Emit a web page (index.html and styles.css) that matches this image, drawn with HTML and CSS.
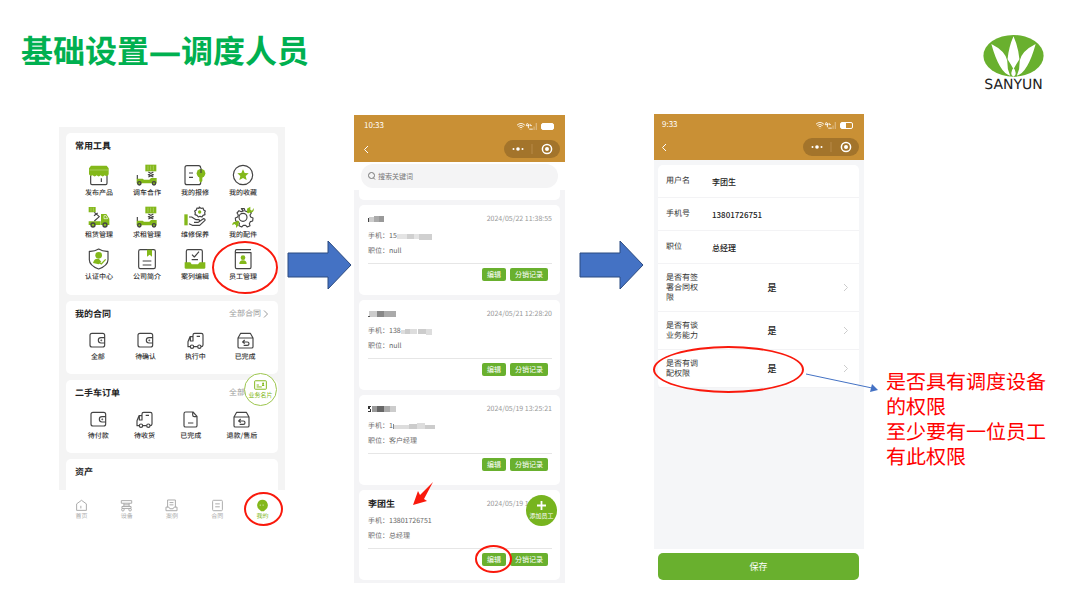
FILE: index.html
```html
<!DOCTYPE html>
<html lang="zh-CN">
<head>
  <meta charset="UTF-8" />
  <meta name="viewport" content="width=device-width, initial-scale=1.0"/>
  <title>基础设置—调度人员</title>
  <link rel="stylesheet" href="styles.css">
</head>
<body>

  <!-- icons used more than once -->
  <svg class="sprite" aria-hidden="true">
    <symbol id="lift" viewBox="0 0 66 66">
      <path class="g" d="M28 2h33v20H28z"/>
      <path class="thin" d="M36 5v14M44 5v14M52 5v14"/>
      <path class="k" d="M37 24l15 8-15 7M52 24l-15 8 15 7M4 33v12"/>
      <path class="g" d="M2 44h18l4 3h16l5-5h17v16H2z"/>
      <circle class="kg" cx="10" cy="58" r="5"/><circle class="kg" cx="54" cy="58" r="5"/>
    </symbol>
    <symbol id="wallet" viewBox="0 0 51 51">
      <rect class="k" x="3" y="4" width="44" height="41" rx="6"/>
      <path class="k" d="M47 17H36a8 8 0 0 0 0 16h11"/><circle class="k" cx="37" cy="25" r="1"/>
    </symbol>
    <symbol id="truck" viewBox="0 0 51 51">
      <path class="k" d="M10 44H3V29l6-15h9M18 14V9q0-5 5-5h20q5 0 5 5v30q0 5-6 5M20 44h12M10 15v12h8V14M29 13h10"/>
      <circle class="k" cx="15" cy="44" r="5"/><circle class="k" cx="37" cy="44" r="5"/>
    </symbol>
    <symbol id="box" viewBox="0 0 51 51">
      <path class="k" d="M3 18L11 4h29l8 14v26q0 4-4 4H7q-4 0-4-4zM3 18h45"/>
      <path class="k" d="M18 30h13a5 5 0 0 1 0 10H20M23 24l-6 6 6 5"/>
    </symbol>
    <symbol id="chevron" viewBox="0 0 10 16"><path d="M2 1l7 7-7 7"/></symbol>
    <symbol id="back" viewBox="0 0 10 16"><path d="M8 1L1 8l7 7"/></symbol>
    <symbol id="signal" viewBox="0 0 24 10">
      <path d="M0 3.500q4.500-4 9 0M1.500 5q3-2.500 6 0M3 6.500q1.500-1 3 0"/><path d="M4.500 8v.5"/>
      <path d="M12 1l-1.500 3H14M13 2v5M15 2v2h2M14 8h4"/><path class="dim" d="M19.500 5v4M22 1v8"/>
    </symbol>
    <symbol id="capsule" viewBox="0 0 56 18">
      <rect class="pill" width="56" height="18" rx="9"/>
      <path class="sep" d="M28 4v10"/>
      <circle cx="9.500" cy="9" r="1"/><circle cx="14" cy="9" r="1.800"/><circle cx="18.500" cy="9" r="1"/>
      <circle cx="43" cy="9" r="2"/><circle class="ring" cx="43" cy="9" r="4.600"/>
    </symbol>
    <symbol id="arrow" viewBox="0 0 66 50">
      <path d="M1 13h40V1l23 24-23 24V37H1z"/>
    </symbol>
  </svg>

  <header class="slide-head">
    <h1>基础设置—调度人员</h1>
    <div class="logo">
      <svg viewBox="0 0 182 127">
        <ellipse cx="91" cy="63" rx="91" ry="63" fill="#69b02e"/>
        <path fill="#fff" d="M91 4Q105 35 109 73L99 89Q91 105 91 98Q91 105 83 89L73 73Q77 35 91 4zM24 27Q66 48 72 77L74 103 81 123Q48 114 24 27zM158 27Q116 48 110 77L108 103 101 123Q134 114 158 27zM91 98Q101 112 96 122L91 126 86 122Q81 112 91 98z"/>
      </svg>
      <span>SANYUN</span>
    </div>
  </header>

  <main class="flow">

    <section class="phone home">
      <div class="home-body">
        <div class="card tools">
          <h2>常用工具</h2>
          <div class="tool-grid">
            <a href="#"><svg viewBox="0 0 66 66"><path class="k" d="M8 34v24q0 4 4 4h41q4 0 4-4V34M40 43v11"/><path class="g" d="M9 5h47l6 8v17a7 7 0 0 1-12 4 8 8 0 0 1-12 0 8 8 0 0 1-12 0 8 8 0 0 1-12 0 7 7 0 0 1-11-4V13z"/><path class="thin" d="M5 18h55"/></svg>发布产品</a>
            <a href="#"><svg><use href="#lift"/></svg>调车合作</a>
            <a href="#"><svg viewBox="0 0 66 66"><path class="k" d="M50 12q0-7-6-7H9Q3 5 3 11v45q0 6 6 6h35q6 0 6-6v-4M15 27h12M15 40h12"/><circle class="g" cx="51" cy="28" r="13"/><path class="g" d="M46 36h9v15l-5 5-4-5z"/><path class="k" d="M51 12v15"/></svg>我的报修</a>
            <a href="#"><svg viewBox="0 0 66 66"><circle class="k" cx="33" cy="33" r="29"/><path class="g" d="M33 16l5 11 12 1-9 8 3 12-11-6-11 6 3-12-9-8 12-1z"/></svg>我的收藏</a>
            <a href="#"><svg viewBox="0 0 66 66"><path class="g" d="M2 3h21v16H2zM2 46h36v11H2zM39 24h16l9 14v19H39z"/><path class="thin" d="M9 5v12M16 5v12"/><path class="w" d="M48 29h6l5 9H48z"/><path class="k" d="M19 19l15 13-15 13M18 29l11-8"/><circle class="kg" cx="15" cy="57" r="6"/><circle class="kg" cx="51" cy="57" r="6"/></svg>租赁管理</a>
            <a href="#"><svg><use href="#lift"/></svg>求租管理</a>
            <a href="#"><svg viewBox="0 0 66 66"><path class="g" d="M1 25h10v33H1z"/><path class="k" d="M15 33h8l13 8h9q4 5-2 8H30M44 48l14-10q6 0 5 5L47 58H25l-10-5M46 3l5 4 6-1 2 6 5 3-2 5 1 6-6 2-3 5-6-2-5 2-4-5-6-2 1-6-2-5 5-3 2-6 6 1z"/><circle class="g" cx="47" cy="18" r="5"/></svg>维修保养</a>
            <a href="#"><svg viewBox="0 0 66 66"><path class="k" d="M28 8h9l2 7 6 2 7-3 6 7-4 6 2 6 7 3-1 9-7 2-3 6 2 6-8 4-5-5h-7l-5 5-8-4 1-7-4-5-7-2-1-9 7-3 2-6-4-6 6-7 7 3 6-2z"/><circle class="k" cx="33" cy="34" r="12"/><path class="wrench" d="M12 54l8-8M46 20l8-8"/><path class="g" d="M46 19l-1-11 10-6v9l5 3 5-8q3 18-19 13zM18 48l2 10-8 8v-8l-5-4-6 4q-1-14 17-10z"/></svg>我的配件</a>
            <a href="#"><svg viewBox="0 0 66 66"><path class="k" d="M32 3q13 8 28 7v25q0 17-28 28Q4 52 4 35V10q15 1 28-7z"/><circle class="g" cx="32" cy="22" r="10"/><path class="g" d="M15 45q4-16 18-12l7 8-8 8z"/><path class="gl" d="M30 42l10 6 13-14"/></svg>认证中心</a>
            <a href="#"><svg viewBox="0 0 66 66"><rect class="k" x="8" y="5" width="50" height="57" rx="5"/><path class="g" d="M33 5h15v21l-7-6-8 6z"/><path class="k" d="M20 39h26M20 51h26"/></svg>公司简介</a>
            <a href="#"><svg viewBox="0 0 66 66"><path class="k" d="M7 45V10q0-5 5-5h38q5 0 5 5v35M24 20l7 7 14-16M23 35h19"/><path class="g" d="M2 43h17l4 6h19l5-6h17v16q0 3-4 3H6q-4 0-4-3z"/></svg>案列编辑</a>
            <a href="#"><svg viewBox="0 0 66 66"><path class="k" d="M57 5H14q-4 0-4 5M10 14h47v44q0 4-4 4H14q-4 0-4-4V10"/><circle class="g" cx="33" cy="29" r="7"/><path class="g" d="M22 48q0-11 11-11t11 11z"/></svg>员工管理</a>
          </div>
          <span class="mark mark-staff"></span>
        </div>

        <div class="card orders">
          <div class="card-head"><h2>我的合同</h2><a href="#">全部合同<svg><use href="#chevron"/></svg></a></div>
          <div class="order-row">
            <a href="#"><svg><use href="#wallet"/></svg>全部</a>
            <a href="#"><svg><use href="#wallet"/></svg>待确认</a>
            <a href="#"><svg><use href="#truck"/></svg>执行中</a>
            <a href="#"><svg><use href="#box"/></svg>已完成</a>
          </div>
        </div>

        <div class="card orders">
          <div class="card-head"><h2>二手车订单</h2><a href="#">全部订单<svg><use href="#chevron"/></svg></a></div>
          <div class="order-row">
            <a href="#"><svg><use href="#wallet"/></svg>待付款</a>
            <a href="#"><svg><use href="#truck"/></svg>待收货</a>
            <a href="#"><svg viewBox="0 0 51 51"><path class="k" d="M11 3h22l12 13v28q0 4-5 4H11q-5 0-5-4V8q0-5 5-5zM32 4v8q0 5 5 5h8M18 36h16"/></svg>已完成</a>
            <a href="#"><svg><use href="#box"/></svg>退款/售后</a>
          </div>
          <button class="biz-card" type="button">
            <svg viewBox="0 0 40 30"><rect x="2" y="2" width="36" height="26" rx="2"/><path d="M8 15h7M8 21h16"/><circle class="g" cx="28" cy="10" r="3"/><path class="g" d="M24 18l2-5h4l2 5z"/></svg>
            业务名片
          </button>
        </div>

        <div class="card last"><h2>资产</h2></div>
      </div>

      <nav class="tabs">
        <a href="#"><svg viewBox="0 0 40 40"><path d="M5 35V15L20 4l15 11v20zM18 21v8"/></svg>首页</a>
        <a href="#"><svg viewBox="0 0 40 40"><path d="M4 5h32v8H4zM12 13v10M28 13v10M12 18h16M6 23h28v6H6z"/><circle cx="9" cy="33" r="4"/><circle cx="31" cy="33" r="4"/></svg>设备</a>
        <a href="#"><svg viewBox="0 0 40 40"><path d="M8 25V3h24v22M14 11h12M14 18h12M3 25h9l3 5h10l3-5h9v11H3z"/></svg>案例</a>
        <a href="#"><svg viewBox="0 0 40 40"><rect x="5" y="4" width="30" height="32" rx="3"/><path d="M13 15h14M13 24h14"/></svg>合同</a>
        <a class="on" href="#"><svg viewBox="0 0 40 40"><path class="g" d="M20 2a17 17 0 0 1 9 31l-5 5h-8l-5-5a17 17 0 0 1 9-31z"/><path class="w" d="M13 17v4M22 17v4"/></svg>我的</a>
        <span class="mark mark-mine"></span>
      </nav>
    </section>

    <svg class="step"><use href="#arrow"/></svg>

    <section class="phone staff">
      <div class="bar">
        <div class="status"><span>10:33</span><svg class="sig"><use href="#signal"/></svg><i class="battery"></i></div>
        <div class="nav"><svg class="back"><use href="#back"/></svg><svg class="capsule"><use href="#capsule"/></svg></div>
      </div>
      <div class="search">
        <svg viewBox="0 0 16 16"><circle cx="7" cy="7" r="6"/><path d="M11 12l3 3"/></svg>
        <input type="search" aria-label="搜索关键词" placeholder="搜索关键词">
      </div>
      <div class="staff-list">
        <div class="prev-card"></div>
        <article class="card person">
          <div class="row"><svg class="mosaic name" viewBox="0 0 28 8"><path fill="#444" d="M0 3h1v4H0z"/><path fill="#ccc" d="M1 2h6v5H1z"/><path fill="#aaa" d="M6 1h5v6H6z"/><path fill="#999" d="M11 1h5v6h-5z"/></svg><time>2024/05/22 11:38:55</time></div>
          <p>手机：15<svg class="mosaic" viewBox="0 0 36 8"><path fill="#e4e4e4" d="M0 2h22v5H0z"/><path fill="#d0d0d0" d="M10 2h7v5h-7zM22 2h13v6H22z"/></svg></p>
          <p>职位：null</p>
          <div class="actions"><button type="button">编辑</button><button type="button">分销记录</button></div>
        </article>
        <article class="card person">
          <div class="row"><svg class="mosaic name" viewBox="0 0 28 8"><path fill="#ccc" d="M1 1h9v6H1z"/><path fill="#888" d="M9 1h7v6H9z"/><path fill="#aaa" d="M16 1h12v6H16z"/><path fill="#555" d="M0 6h2v1H0z"/></svg><time>2024/05/21 12:28:20</time></div>
          <p>手机：138<svg class="mosaic" viewBox="0 0 36 8"><path fill="#ddd" d="M0 3h5v4H0zM8 2h8v5H8zM25 2h6v6h-6z"/><path fill="#ccc" d="M4 2h5v5H4zM17 2h8v5h-8z"/></svg></p>
          <p>职位：null</p>
          <div class="actions"><button type="button">编辑</button><button type="button">分销记录</button></div>
        </article>
        <article class="card person">
          <div class="row"><svg class="mosaic name" viewBox="0 0 28 8"><path fill="#333" d="M0 1h3v1H2v2h1v3H0V6h2V4H0z"/><path fill="#999" d="M4 1h5v6H4z"/><path fill="#666" d="M9 1h7v6H9z"/><path fill="#aaa" d="M16 1h6v6h-6z"/><path fill="#ccc" d="M22 1h6v6h-6z"/></svg><time>2024/05/19 13:25:21</time></div>
          <p>手机：1<svg class="mosaic wide" viewBox="0 0 44 8"><path fill="#888" d="M0 2h1v5H0z"/><path fill="#ddd" d="M1 3h15v4H1zM24 1h8v6h-8z"/><path fill="#ccc" d="M16 2h8v5h-8zM32 3h10v4H32z"/></svg></p>
          <p>职位：客户经理</p>
          <div class="actions"><button type="button">编辑</button><button type="button">分销记录</button></div>
        </article>
        <article class="card person">
          <div class="row"><h2>李团生</h2><time>2024/05/19 13:20:10</time></div>
          <p>手机：13801726751</p>
          <p>职位：总经理</p>
          <div class="actions"><button type="button">编辑</button><button type="button">分销记录</button></div>
          <button class="add" type="button"><svg viewBox="0 0 10 10"><path d="M5 0v10M0 5h10"/></svg>添加员工</button>
          <svg class="pointer" viewBox="0 0 22 25"><path d="M21 1L12 18l3 2L1 24 6 10l2 4z"/></svg>
          <span class="mark mark-edit"></span>
        </article>
      </div>
    </section>

    <svg class="step step-2"><use href="#arrow"/></svg>

    <section class="phone edit">
      <div class="bar">
        <div class="status"><span>9:33</span><svg class="sig"><use href="#signal"/></svg><i class="battery half"></i></div>
        <div class="nav"><svg class="back"><use href="#back"/></svg><svg class="capsule"><use href="#capsule"/></svg></div>
      </div>
      <form class="edit-form">
        <div class="fields">
          <div class="field"><label for="user">用户名</label><input id="user" type="text" value="李团生"></div>
          <div class="field"><label for="tel">手机号</label><input id="tel" type="text" value="13801726751"></div>
          <div class="field"><label for="job">职位</label><input id="job" type="text" value="总经理"></div>
          <div class="field tall"><label for="sign">是否有签署合同权限</label><select id="sign"><option>是</option></select><svg><use href="#chevron"/></svg></div>
          <div class="field mid"><label for="talk">是否有谈业务能力</label><select id="talk"><option>是</option></select><svg><use href="#chevron"/></svg></div>
          <div class="field mid">
            <label for="assign">是否有调配权限</label><select id="assign"><option>是</option></select><svg><use href="#chevron"/></svg>
            <span class="mark mark-assign"></span>
            <svg class="connector" viewBox="0 0 74 20"><path class="line" d="M1 1l66 14"/><path class="head" d="M67 11l6 6-8 2z"/></svg>
          </div>
        </div>
      </form>
      <div class="save"><button type="button">保存</button></div>
    </section>

    <p class="note">是否具有调度设备的权限<br>至少要有一位员工有此权限</p>

  </main>

</body>
</html>
```

FILE: styles.css
```css
* {
  box-sizing: border-box;
}
body {
  margin: 0;
  background: #fff;
  color: #333;
  font-family: "Noto Sans CJK SC", sans-serif;
  font-size: 7px;
  line-height: 10px;
  text-rendering: geometricPrecision;
}
h1, h2, p {
  margin: 0;
}
h2 {
  font-size: 9px;
  line-height: 12px;
  color: #222;
}
a {
  color: inherit;
  text-decoration: none;
}
button, input, select {
  font-family: inherit;
  border: none;
  padding: 0;
  margin: 0;
}
svg {
  display: block;
  flex: none;
}
.sprite {
  position: absolute;
  width: 0;
  height: 0;
}
.k {
  fill: none;
  stroke: #444;
  stroke-width: 3.5;
  stroke-linejoin: round;
}
.g {
  fill: #83b81a;
  stroke: none;
}
.kg {
  fill: #83b81a;
  stroke: #444;
  stroke-width: 4;
}
.gl {
  fill: none;
  stroke: #83b81a;
  stroke-width: 4;
}
.w {
  fill: none;
  stroke: #fff;
  stroke-width: 2;
}
.thin {
  fill: none;
  stroke: #b9d67a;
  stroke-width: 2;
}
.wrench {
  stroke: #83b81a;
  stroke-width: 7;
}

/* header */
.slide-head {
  display: flex;
  justify-content: space-between;
  align-items: flex-start;
  height: 114px;
  padding: 28px 42px 0 21px;
}
h1 {
  font-family: "Open Sans", "Noto Sans CJK SC", sans-serif;
  font-size: 32px;
  line-height: 48px;
  color: #00b050;
}
.logo {
  display: flex;
  flex-direction: column;
  align-items: center;
  padding-top: 7px;
  font-family: "DejaVu Sans", sans-serif;
  font-size: 14px;
  line-height: 16px;
  color: #222;
}
.logo svg {
  width: 61px;
  height: 42px;
}

/* three screens with an arrow between each */
.flow {
  display: grid;
  grid-template-columns: 226fr 69px 211fr 89px 210fr 222px;
  align-items: start;
  padding-left: 59px;
}
.step {
  width: 66px;
  height: 50px;
  margin: 126px auto 0;
  fill: #4472c4;
  stroke: #2b4a80;
  stroke-width: 1;
}
.step-2 {
  margin-left: 14px;
}
.card {
  position: relative;
  background: #fff;
  border-radius: 5px;
}
.mark {
  position: absolute;
  border: 2px solid #f9190c;
  border-radius: 50%;
  pointer-events: none;
}

/* home screen */
.home {
  margin-top: 13px;
}
.home-body {
  display: flex;
  flex-direction: column;
  gap: 6px;
  padding: 6px 7px 0;
  background: #f4f4f4;
}
.home .card {
  padding: 7px 8px 7px 9px;
}
.tool-grid {
  display: grid;
  grid-template-columns: repeat(4, 1fr);
  row-gap: 8px;
  padding: 12px 3px 6px 0;
}
.tool-grid a,
.order-row a,
.tabs a {
  display: flex;
  flex-direction: column;
  align-items: center;
}
.tool-grid a {
  gap: 2px;
  font-weight: 500;
}
.tool-grid svg {
  width: 22px;
  height: 22px;
}
.mark-staff {
  right: 0;
  bottom: 1px;
  width: 66px;
  height: 53px;
}
.card-head {
  display: flex;
  justify-content: space-between;
  align-items: center;
}
.card-head a {
  display: flex;
  align-items: center;
  gap: 2px;
  padding-right: 2px;
  font-size: 8px;
  color: #999;
}
.card-head svg {
  width: 5px;
  height: 8px;
  fill: none;
  stroke: #999;
  stroke-width: 2;
}
.order-row {
  display: flex;
  justify-content: space-around;
  padding: 12px 0 5px;
  font-weight: 500;
}
.order-row a {
  gap: 3px;
}
.order-row svg {
  width: 17px;
  height: 17px;
}
.biz-card {
  position: absolute;
  right: 1px;
  top: -7px;
  display: flex;
  flex-direction: column;
  align-items: center;
  justify-content: center;
  width: 33px;
  height: 33px;
  border: 1px solid #9dc64e;
  border-radius: 50%;
  background: #fff;
  color: #83b81a;
  font-size: 6px;
  line-height: 9px;
  white-space: nowrap;
}
.biz-card svg {
  width: 13px;
  height: 10px;
  fill: none;
  stroke: #83b81a;
  stroke-width: 3;
}
.home .last {
  padding-bottom: 12px;
  border-radius: 5px 5px 0 0;
}
.tabs {
  position: relative;
  display: grid;
  grid-template-columns: repeat(5, 1fr);
  padding-top: 9px;
  color: #aaa;
  font-size: 6px;
  line-height: 8px;
}
.tabs svg {
  width: 13px;
  height: 13px;
  fill: none;
  stroke: #aaa;
  stroke-width: 3;
}
.tabs .on {
  color: #83b81a;
}
.mark-mine {
  right: 2px;
  top: 2px;
  width: 39px;
  height: 34px;
}

/* phone top bar */
.bar {
  display: flex;
  flex-direction: column;
  gap: 8px;
  padding: 5px 5px 4px 10px;
  background: #c99035;
  color: #fff;
}
.status {
  display: flex;
  align-items: center;
  gap: 3px;
  padding-right: 6px;
  font-size: 8px;
  line-height: 12px;
}
.status span {
  flex: 1;
}
.sig {
  width: 21px;
  height: 9px;
  fill: none;
  stroke: #fff;
  stroke-width: 1;
}
.dim {
  opacity: 0.5;
}
.battery {
  width: 13px;
  height: 7px;
  border: 1px solid #fff;
  border-radius: 2px;
  background: #fff;
}
.battery.half {
  background: linear-gradient(to right, #fff 45%, transparent 45%);
}
.nav {
  display: flex;
  justify-content: space-between;
  align-items: center;
}
.back {
  width: 5px;
  height: 9px;
  fill: none;
  stroke: #fff;
  stroke-width: 2;
}
.capsule {
  width: 56px;
  height: 18px;
  fill: #fff;
}
.pill {
  fill: #a3742b;
}
.sep {
  stroke: #b88a48;
}
.ring {
  fill: none;
  stroke: #fff;
  stroke-width: 1.5;
}

/* staff list */
.staff {
  padding-top: 1px;
}
.search {
  display: flex;
  align-items: center;
  gap: 2px;
  height: 24px;
  margin: 2px 7px;
  padding: 0 7px;
  border-radius: 12px;
  background: #f4f4f5;
}
.search svg {
  width: 8px;
  height: 8px;
  fill: none;
  stroke: #777;
  stroke-width: 2;
}
.search input {
  flex: 1;
  min-width: 0;
  background: none;
  font-size: 7px;
}
.search input::placeholder {
  color: #777;
}
.staff-list {
  display: flex;
  flex-direction: column;
  gap: 5px;
  padding: 0 5px 3px;
  background: #f4f4f6;
}
.prev-card {
  height: 10px;
  border-radius: 0 0 5px 5px;
  background: #fff;
}
.person {
  padding: 8px 8px 14px 9px;
  color: #666;
}
.row {
  display: flex;
  justify-content: space-between;
  align-items: center;
  height: 12px;
  margin-bottom: 3px;
}
.row time {
  color: #999;
}
.person p {
  display: flex;
  align-items: center;
  height: 15px;
}
.mosaic {
  width: 36px;
  height: 8px;
}
.mosaic.name {
  width: 28px;
}
.mosaic.wide {
  width: 44px;
}
.actions {
  display: flex;
  justify-content: flex-end;
  gap: 4px;
  margin-top: 5px;
  padding: 4px 4px 0 0;
  border-top: 1px solid #e6e6e6;
}
.actions button {
  height: 13px;
  padding: 0 5px;
  border-radius: 2px;
  background: #69b02e;
  color: #fff;
  font-size: 7px;
  line-height: 13px;
}
.add {
  position: absolute;
  right: 3px;
  top: 5px;
  display: flex;
  flex-direction: column;
  align-items: center;
  justify-content: center;
  gap: 1px;
  width: 31px;
  height: 31px;
  border-radius: 50%;
  background: #77b41f;
  color: #fff;
  font-size: 6px;
  line-height: 9px;
  white-space: nowrap;
}
.add svg {
  width: 9px;
  height: 9px;
  stroke: #fff;
  stroke-width: 2;
}
.pointer {
  position: absolute;
  left: 53px;
  top: -9px;
  width: 22px;
  height: 25px;
  fill: #f9190c;
}
.mark-edit {
  right: 48px;
  bottom: 7px;
  width: 37px;
  height: 28px;
}

/* edit form */
.edit .bar {
  gap: 7px;
  padding-left: 8px;
}
.edit-form {
  min-height: 389px;
  padding: 5px 5px 0 4px;
  background: #f5f6f8;
}
.fields {
  border-radius: 5px;
  background: #fff;
}
.field {
  position: relative;
  display: flex;
  align-items: center;
  height: 33px;
  padding: 0 11px 0 8px;
  border-bottom: 1px solid #f3f3f5;
  font-size: 8px;
}
.field.tall {
  height: 48px;
}
.field.mid {
  height: 38px;
}
.field label {
  flex: none;
  width: 34px;
  margin-right: 12px;
}
.field input,
.field select {
  width: 120px;
  min-width: 0;
  background: none;
  color: #222;
  font-size: 8px;
  font-weight: 500;
}
.field select {
  appearance: none;
  font-size: 9px;
  text-align: center;
  text-align-last: center;
}
.field > svg:not(.connector) {
  width: 5px;
  height: 9px;
  margin-left: auto;
  fill: none;
  stroke: #ccc;
  stroke-width: 2;
}
.mark-assign {
  left: -5px;
  top: -4px;
  width: 151px;
  height: 47px;
}
.connector {
  position: absolute;
  left: 147px;
  top: 23px;
  width: 74px;
  height: 20px;
}
.connector .line {
  stroke: #4472c4;
}
.connector .head {
  fill: #4472c4;
}
.save {
  padding: 4px 5px 3px 4px;
}
.save button {
  display: block;
  width: 100%;
  height: 27px;
  border-radius: 5px;
  background: #69b02e;
  color: #fff;
  font-size: 9px;
}

/* red remark */
.note {
  width: 168px;
  margin: 254px 0 0 22px;
  color: #f00;
  font-size: 20px;
  line-height: 25px;
}
```
